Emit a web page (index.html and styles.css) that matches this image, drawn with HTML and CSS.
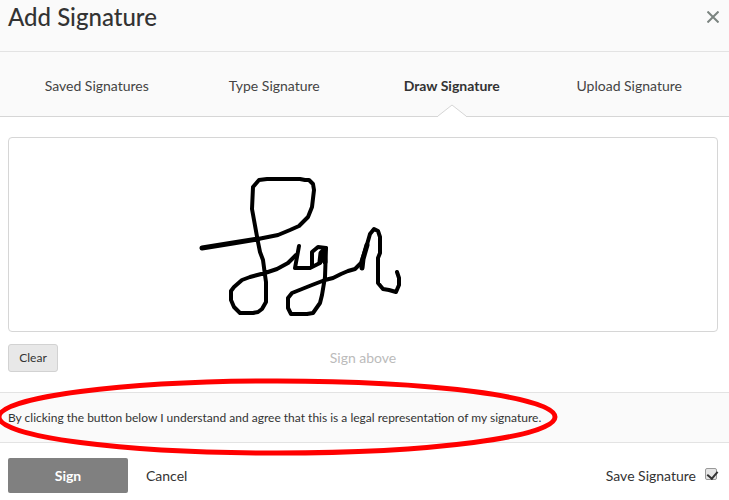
FILE: index.html
```html
<!DOCTYPE html>
<html lang="en">
<head>
    <meta charset="UTF-8">
    <meta name="viewport" content="width=device-width, initial-scale=1.0">
    <title>Add Signature</title>
    <link rel="stylesheet" href="styles.css">
</head>
<body>
    <header class="header">
        <h1>Add Signature</h1>
        <button type="button" class="close" aria-label="Close">
            <svg width="12" height="12" viewBox="0 0 12 12"><path d="M0.5 0.5L11.5 11.5M11.5 0.5L0.5 11.5"/></svg>
        </button>
    </header>
    <nav class="tabs">
        <a href="#saved">Saved Signatures</a>
        <a href="#type">Type Signature</a>
        <a href="#draw" class="active">Draw Signature
            <svg class="notch" width="30" height="13" viewBox="0 0 30 13"><path d="M0 13L1 12L15 1L29 12L30 13"/></svg>
        </a>
        <a href="#upload">Upload Signature</a>
    </nav>
    <main class="draw">
        <div class="pad">
            <svg viewBox="9 138 708 193" role="img" aria-label="Drawn signature">
                <path class="thick" d="M202 248L233 243L258 239"/>
                <path d="M258 239L278 235L290 230L299 226L308 217L312 207L314 190L313 184L309 180L305 180L300 179L267 179L259 180L253 187L252 209L254 220L258 242L260 252L263 260L265 275L266 282L266 302L262 309L258 312L253 313L240 313L234 307L231 300L231 291L234 287L242 280L250 277L265 273L277 269L288 263L296 255"/>
                <path d="M299 246L297 257L295 268L310 268L320 263L326 248"/>
                <path d="M312 266L312 252L318 247L326 248L325 277L322 295L320 303L313 313L307 314L291 314L288 308L288 298L292 293L312 285L325 280L333 278L341 274L348 271L355 269L361 263L366 248L370 234L374 229L378 231L380 237L380 253L378 258L378 283L383 289L389 290L396 292L399 285L399 278L397 272"/>
                <path class="thick" d="M320 262L321 253L324 250L325 262M362 268L363 259L367 245"/>
            </svg>
        </div>
        <div class="pad-footer">
            <button type="button" class="clear">Clear</button>
            <span class="hint">Sign above</span>
        </div>
    </main>
    <section class="notice">
        <p>By clicking the button below I understand and agree that this is a legal representation of my signature.</p>
        <svg class="highlight" width="560" height="78" viewBox="0 0 560 78"><ellipse cx="277" cy="39" rx="278" ry="36"/></svg>
    </section>
    <footer class="actions">
        <button type="submit" class="sign">Sign</button>
        <button type="button" class="cancel">Cancel</button>
        <div class="save">
            <label for="save">Save Signature</label>
            <input type="checkbox" id="save" checked>
        </div>
    </footer>
</body>
</html>
```
FILE: styles.css
```css
* {
    box-sizing: border-box;
}
body {
    margin: 0;
    background-color: #fff;
    color: #333;
    font-family: Lato, "Open Sans", sans-serif;
    font-size: 14px;
    line-height: 20px;
    overflow-x: hidden;
}
button {
    font: inherit;
    color: inherit;
    padding: 0;
    border: none;
    background: none;
    cursor: pointer;
}
.header {
    display: flex;
    justify-content: space-between;
    height: 52px;
    padding: 1px 10px 0 8px;
    background-color: #fafafa;
    border-bottom: 1px solid #e3e3e3;
}
h1 {
    margin: 0;
    font-size: 24px;
    font-weight: 500;
    line-height: 32px;
}
.close {
    width: 12px;
    height: 32px;
}
.close svg {
    display: block;
    stroke: #7b8480;
    stroke-width: 2;
}
.tabs {
    display: grid;
    grid-template-columns: repeat(4, 1fr);
    height: 65px;
    padding: 0 11px 0 8px;
    background-color: #fafafa;
    border-bottom: 1px solid #d6d6d6;
}
.tabs a {
    position: relative;
    padding-top: 24px;
    color: #444;
    text-align: center;
    text-decoration: none;
}
.tabs .active {
    color: #333;
    font-weight: bold;
}
/* little arrow that opens the bottom border under the active tab */
.notch {
    position: absolute;
    left: 50%;
    bottom: -1px;
    margin-left: -15px;
    fill: #fff;
    stroke: #d6d6d6;
}
.draw {
    padding: 20px 11px 20px 8px;
}
.pad {
    border: 1px solid #d6d6d6;
    border-radius: 4px;
}
.pad svg {
    display: block;
    width: 100%;
    height: 193px;
    fill: none;
    stroke: #000;
    stroke-width: 4;
    stroke-linecap: round;
    stroke-linejoin: round;
}
.pad .thick {
    stroke-width: 5;
}
.pad-footer {
    display: grid;
    grid-template-columns: 1fr auto 1fr;
    align-items: center;
    margin-top: 12px;
}
.clear {
    width: 50px;
    height: 28px;
    background-color: #e8e8e8;
    border: 1px solid #d2d2d2;
    border-radius: 3px;
    font-size: 12px;
}
.hint {
    color: #bbb;
}
.notice {
    position: relative;
    padding: 15px 8px 14px;
    background-color: #fafafa;
    border-top: 1px solid #e3e3e3;
    border-bottom: 1px solid #e3e3e3;
}
.notice p {
    margin: 0;
    font-size: 12px;
}
.highlight {
    position: absolute;
    left: 0;
    top: -15px;
    fill: none;
    stroke: #f00;
    stroke-width: 5;
    pointer-events: none;
}
.actions {
    display: flex;
    align-items: center;
    gap: 18px;
    padding: 15px 12px 7px 8px;
}
.sign {
    width: 120px;
    height: 35px;
    background-color: #808080;
    border-radius: 2px;
    color: #fff;
    font-weight: bold;
}
.save {
    display: flex;
    align-items: center;
    gap: 9px;
    margin-left: auto;
}
.save input {
    appearance: none;
    width: 12px;
    height: 12px;
    margin: 0 0 4px;
    border: 1px solid #999;
    border-radius: 2px;
    background-color: #e6e6e6;
}
.save input:checked::before {
    content: "";
    display: block;
    width: 5px;
    height: 8px;
    margin: 0 0 0 3px;
    border: solid #333;
    border-width: 0 2px 2px 0;
    transform: rotate(40deg);
}
```
